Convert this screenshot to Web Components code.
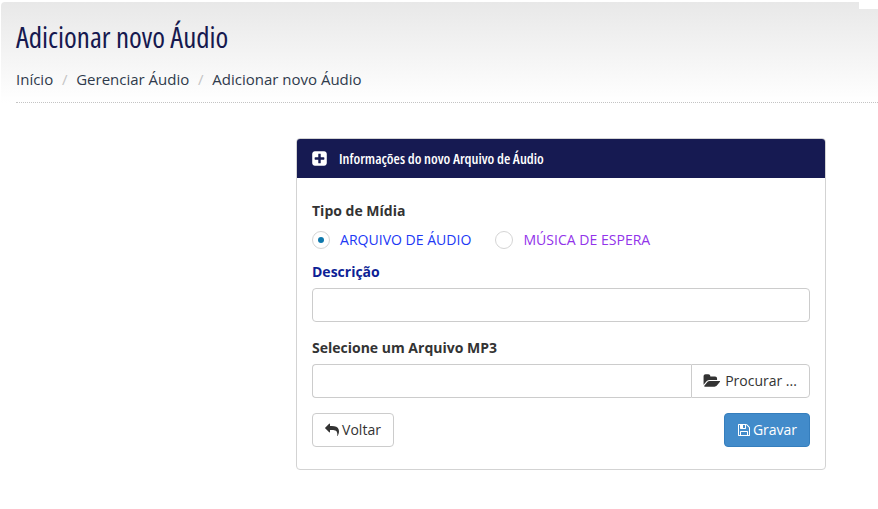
<!DOCTYPE html>
<html lang="pt"><head><meta charset="utf-8"><title>Adicionar novo Áudio</title>
<style>
html,body{margin:0;padding:0;background:#fff}
body{font:14px/20px "Open Sans",sans-serif;color:#333;width:878px;height:509px;overflow:hidden}
</style></head><body>
<page-bar></page-bar>
<audio-form></audio-form>
<script>
function def(name,html){customElements.define(name,class extends HTMLElement{constructor(){super();this.attachShadow({mode:'open'}).innerHTML=html}})}
def('page-bar',`<style>
:host{display:block;margin:2px 0 0 1px;height:101px;box-sizing:border-box;padding:0 0 0 15px;background:linear-gradient(#e8e8e8,#fff);border-radius:4px 0 0 0;position:relative}
h1{margin:0;padding-top:17px;height:37px;font:500 29px/36px "Open Sans",sans-serif;font-stretch:75%;color:#16194f;white-space:nowrap}
nav{display:flex;margin-top:13px;font-size:15px;line-height:20px;color:#2f3a4c;height:22px}
nav i{font-style:normal;color:#c4c4c4;margin:0 8.75px}
.rule{position:absolute;left:15px;right:0;bottom:0;border-bottom:1px dotted #c4c4c4}
.notch{position:absolute;right:0;top:0;width:19px;height:7px;background:#fff}
</style><h1>Adicionar novo Áudio</h1><nav><span>Início</span><i>/</i><span>Gerenciar Áudio</span><i>/</i><span>Adicionar novo Áudio</span></nav><div class="rule"></div><div class="notch"></div>`);
def('form-radio',`<style>
:host{display:inline-flex;align-items:center;gap:10px;font-size:14.05px;line-height:20px;color:var(--c)}
b{display:block;width:16px;height:16px;border:1px solid #d4d4d4;border-radius:50%;background:#fff;position:relative}
:host([checked]) b::after{content:"";position:absolute;left:5px;top:5px;width:6px;height:6px;border-radius:50%;background:#0f79ad}
</style><b></b><slot></slot>`);
def('audio-form',`<style>
:host{display:block;box-sizing:border-box;width:530px;height:332px;margin:35px 0 0 296px;border:1px solid #d3d3d3;border-radius:4px;overflow:hidden}
header{height:39px;background:#161a52;color:#fff;display:flex;align-items:center;padding-left:14px;gap:11px;font:600 14.5px/20px "Open Sans",sans-serif;font-stretch:75%}
main{padding:23px 15px 0}
label{display:block;font-weight:700;font-size:14px;line-height:20px}
.radios{display:flex;gap:24px;margin-top:9px}
.blue{color:#0d1f96;margin-top:12px}
.input{height:34px;box-sizing:border-box;border:1px solid #ccc;border-radius:4px;background:#fff}
.file{display:flex;margin-top:6px}
.file .input{flex:1;border-radius:4px 0 0 4px;border-right:0}
.browse{width:119px;box-sizing:border-box;height:34px;border:1px solid #ccc;border-radius:0 4px 4px 0;display:flex;align-items:center;justify-content:center;gap:3px;color:#333}
.browse svg{margin:0 1px 0 -1px}
.btns{display:flex;justify-content:space-between;margin-top:15px}
.btn{height:34px;box-sizing:border-box;border:1px solid #ccc;border-radius:4px;display:flex;align-items:center;justify-content:center;gap:3px;color:#333;background:#fff}
.back{width:82px}.save{width:86px;background:#428bca;border-color:#357ebd;color:#fff;gap:2px}
svg{display:block;flex:none}
</style>
<header><svg width="17" height="17" viewBox="0 0 1792 1792" fill="#fff"><path d="M1408 960v-128q0-26-19-45t-45-19h-320v-320q0-26-19-45t-45-19h-128q-26 0-45 19t-19 45v320h-320q-26 0-45 19t-19 45v128q0 26 19 45t45 19h320v320q0 26 19 45t45 19h128q26 0 45-19t19-45v-320h320q26 0 45-19t19-45zm256-544v960q0 119-84.500 203.500t-203.500 84.500h-960q-119 0-203.500-84.500t-84.500-203.500v-960q0-119 84.500-203.500t203.500-84.500h960q119 0 203.500 84.500t84.500 203.500z"/></svg><span>Informações do novo Arquivo de Áudio</span></header>
<main>
<label>Tipo de Mídia</label>
<div class="radios"><form-radio checked style="--c:#2138f5">ARQUIVO DE ÁUDIO</form-radio><form-radio style="--c:#9233ea">MÚSICA DE ESPERA</form-radio></div>
<label class="blue">Descrição</label>
<div class="input" style="margin-top:6px"></div>
<label style="margin-top:16px">Selecione um Arquivo MP3</label>
<div class="file"><div class="input"></div><div class="browse"><svg width="18" height="16" viewBox="0 0 2048 1792" fill="#333"><path d="M1943 952q0 31-31 66l-336 396q-43 51-120.500 86.500t-143.500 35.500h-1088q-34 0-60.500-13t-26.500-43q0-31 31-66l336-396q43-51 120.500-86.500t143.500-35.500h1088q34 0 60.500 13t26.500 43zm-343-344v160h-832q-94 0-197 47.500t-164 119.500l-337 396-5 6q0-4-.5-12.500t-.5-12.500v-960q0-92 66-158t158-66h320q92 0 158 66t66 158v32h544q92 0 158 66t66 158z"/></svg><span>Procurar ...</span></div></div>
<div class="btns"><div class="btn back"><svg width="14" height="14" viewBox="0 0 1792 1792" fill="#333"><path d="M1792 1120q0 166-127 451-3 7-10.500 24t-13.500 30-13 22q-12 17-28 17-15 0-23.500-10t-8.500-25q0-9 2.500-26.500t2.500-23.500q5-68 5-123 0-101-17.500-181t-48.500-138.500-80-101-105.500-69.500-133-42.500-154-21.500-175.500-6h-224v256q0 26-19 45t-45 19-45-19l-512-512q-19-19-19-45t19-45l512-512q19-19 45-19t45 19 19 45v256h224q713 0 875 403 53 134 53 333z"/></svg><span>Voltar</span></div><div class="btn save"><svg width="14" height="14" viewBox="0 0 1792 1792" fill="#fff"><path d="M512 1536h768v-384h-768v384zm896 0h128v-896q0-14-10-38.500t-20-34.500l-281-281q-10-10-34-20t-39-10v416q0 40-28 68t-68 28h-576q-40 0-68-28t-28-68v-416h-128v1280h128v-416q0-40 28-68t68-28h832q40 0 68 28t28 68v416zm-384-928v-320q0-13-9.500-22.500t-22.500-9.500h-192q-13 0-22.500 9.500t-9.500 22.500v320q0 13 9.500 22.500t22.500 9.500h192q13 0 22.500-9.500t9.500-22.500zm640 32v928q0 40-28 68t-68 28h-1344q-40 0-68-28t-28-68v-1344q0-40 28-68t68-28h928q40 0 88 20t76 48l280 280q28 28 48 76t20 88z"/></svg><span>Gravar</span></div></div>
</main>`);
</script>
</body></html>
